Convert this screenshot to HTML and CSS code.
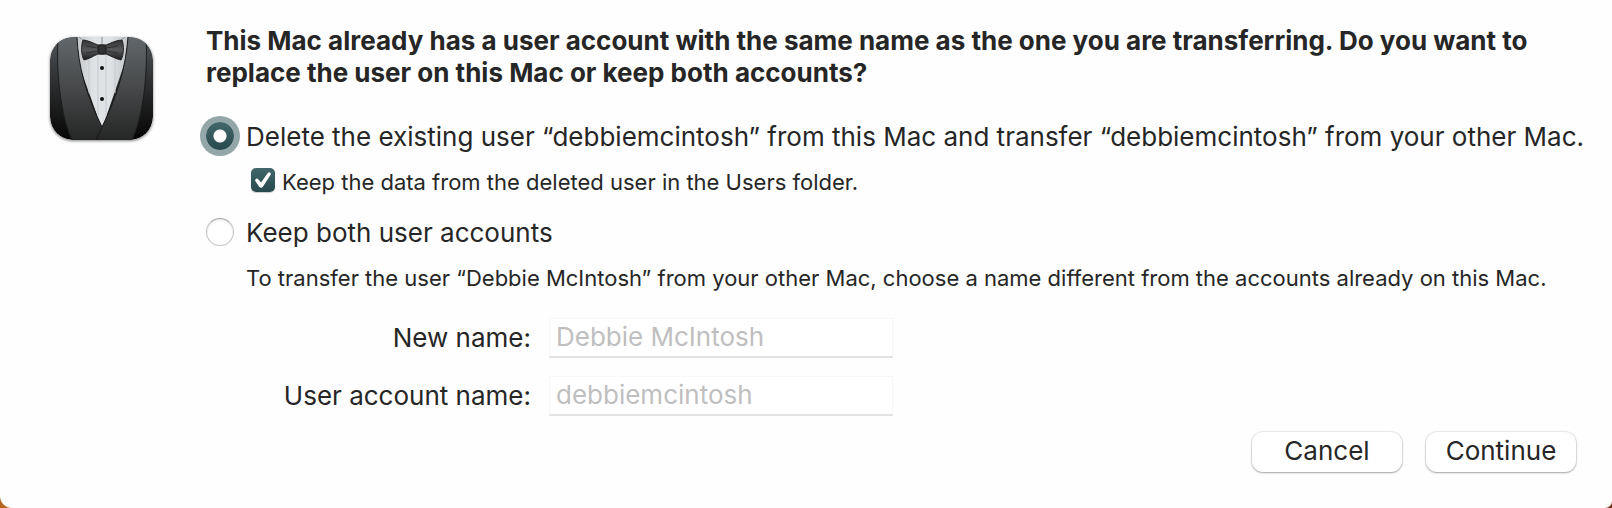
FILE: index.html
```html
<!DOCTYPE html>
<html lang="en">
<head>
    <meta charset="UTF-8">
    <meta name="viewport" content="width=device-width, initial-scale=1.0">
    <title>Migration Assistant</title>
    <link rel="stylesheet" href="styles.css">
</head>
<body>
    <form class="dialog">
        <svg class="app-icon" viewBox="0 0 103 103" aria-hidden="true">
            <defs>
                <clipPath id="tile"><rect width="103" height="103" rx="23"/></clipPath>
                <linearGradient id="jacket" x1="0" y1="0" x2="0" y2="1">
                    <stop offset="0" stop-color="#62676b"/>
                    <stop offset="0.5" stop-color="#464849"/>
                    <stop offset="1" stop-color="#252626"/>
                </linearGradient>
                <linearGradient id="sleeve" x1="0" y1="0" x2="0" y2="1">
                    <stop offset="0" stop-color="#50555a"/>
                    <stop offset="0.5" stop-color="#292a2b"/>
                    <stop offset="1" stop-color="#050505"/>
                </linearGradient>
                <linearGradient id="shirt" x1="0" y1="0" x2="1" y2="0">
                    <stop offset="0" stop-color="#c4c7ca"/>
                    <stop offset="0.35" stop-color="#e0e3e6"/>
                    <stop offset="0.65" stop-color="#e0e3e6"/>
                    <stop offset="1" stop-color="#c4c7ca"/>
                </linearGradient>
                <linearGradient id="bow" x1="0" y1="0" x2="0" y2="1">
                    <stop offset="0" stop-color="#303132"/>
                    <stop offset="0.5" stop-color="#58595a"/>
                    <stop offset="1" stop-color="#1c1c1d"/>
                </linearGradient>
            </defs>
            <g clip-path="url(#tile)">
                <rect width="103" height="103" fill="url(#sleeve)"/>
                <path d="M26 0H78L75 25L52 92L28 25Z" fill="url(#shirt)"/>
                <path d="M39 10V56M48 10V80M56 10V80M65 10V56" stroke="#c6c9cd" stroke-width="1"/>
                <path d="M52 0V7M29 0L36 6M75 0L68 6" stroke="#8d9194" stroke-width="1" fill="none"/>
                <path d="M8 0H27C28 28 36 58 52 90L47 103H22C11 80 6 38 8 0Z" fill="url(#jacket)"/>
                <path d="M96 0H78C76 28 68 58 52 90L47 103H82C93 80 98 38 96 0Z" fill="url(#jacket)"/>
                <path d="M8 0C6 38 11 80 22 103M96 0C98 38 93 80 82 103" stroke="#1b1c1d" stroke-width="1" fill="none"/>
                <path d="M27 0C28 28 36 58 52 90M78 0C76 28 68 58 52 90L46 103" stroke="#19191a" stroke-width="1" fill="none"/>
                <path d="M48 8C43 6 37 3 33 3C31 8 31 18 34 23C39 22 43 19 48 17H56C61 19 66 22 71 23C74 18 74 8 72 3C67 3 61 6 56 8Z" fill="url(#bow)" stroke="#242526" stroke-width="1"/>
                <path d="M36 9L47 11M36 16L47 14M68 9L57 11M68 16L57 14" stroke="#303132" stroke-width="1"/>
                <rect x="48" y="8" width="8" height="9" rx="2" fill="#303132" stroke="#1b1b1b"/>
                <circle cx="52" cy="31" r="2" fill="#111"/>
                <circle cx="52" cy="62" r="2" fill="#111"/>
            </g>
        </svg>

        <div class="content">
            <h1>This Mac already has a user account with the same name as the one you are transferring. Do you want to replace the user on this Mac or keep both accounts?</h1>

            <div class="option">
                <input type="radio" name="account" id="replace" checked>
                <label for="replace">Delete the existing user “debbiemcintosh” from this Mac and transfer “debbiemcintosh” from your other Mac.</label>
            </div>
            <div class="sub-option">
                <input type="checkbox" id="keep-data" checked>
                <label for="keep-data">Keep the data from the deleted user in the Users folder.</label>
            </div>
            <div class="option">
                <input type="radio" name="account" id="keep-both">
                <label for="keep-both">Keep both user accounts</label>
            </div>
            <p class="note">To transfer the user “Debbie McIntosh” from your other Mac, choose a name different from the accounts already on this Mac.</p>

            <div class="fields">
                <label for="new-name">New name:</label>
                <input type="text" id="new-name" value="Debbie McIntosh" disabled>
                <label for="account-name">User account name:</label>
                <input type="text" id="account-name" value="debbiemcintosh" disabled>
            </div>

            <div class="buttons">
                <button type="button">Cancel</button>
                <button type="submit">Continue</button>
            </div>
        </div>
    </form>
</body>
</html>
```

FILE: styles.css
```css
* {
    box-sizing: border-box;
}
body {
    margin: 0;
    background: linear-gradient(to right, #b5651d, #7a2e14);
    color: #262626;
    font-family: Inter, "Liberation Sans", sans-serif;
    font-size: 26px;
    line-height: 32px;
}
.dialog {
    display: flex;
    gap: 53px;
    min-height: 100vh;
    padding: 25px 36px 36px 50px;
    background: #fefefe;
    border-radius: 0 0 7px 12px;
}
.app-icon {
    flex: none;
    width: 103px;
    height: 103px;
    margin-top: 12px;
    border-radius: 23px;
    box-shadow: 0 1px 3px rgba(0, 0, 0, 0.5);
}
.content {
    flex: 1;
    display: flex;
    flex-direction: column;
    min-width: 0;
}
h1 {
    margin: 0 0 32px;
    font-size: 26px;
    font-weight: 700;
}
.option {
    display: flex;
    align-items: center;
    gap: 12px;
}
.option label,
.sub-option label,
.note {
    white-space: nowrap;
}
input[type="radio"] {
    appearance: none;
    flex: none;
    width: 28px;
    height: 28px;
    margin: 0 0 2px;
    border: 1px solid #c4c4c4;
    border-top-color: #a8a8a8;
    border-radius: 50%;
    background: #fff;
    box-shadow: inset 0 1px 2px rgba(0, 0, 0, 0.12);
}
input[type="radio"]:checked {
    border: none;
    background: radial-gradient(circle, #fff 6px, transparent 7px), linear-gradient(#42686c, #27494e);
    box-shadow: 0 0 0 6px #93a7a9;
}
.sub-option {
    display: flex;
    align-items: flex-start;
    gap: 7px;
    margin: 13px 0 19px 45px;
    font-size: 22px;
}
input[type="checkbox"] {
    appearance: none;
    flex: none;
    display: grid;
    place-items: center;
    width: 24px;
    height: 24px;
    margin: 2px 0 0;
    border-radius: 5px;
    background: linear-gradient(#42686c, #27494e);
    box-shadow: 0 1px 1px rgba(0, 0, 0, 0.2);
}
input[type="checkbox"]:checked::before {
    content: "";
    width: 16px;
    height: 16px;
    background: #fff;
    clip-path: path("M0.3 9 C-0.4 7 2 5.8 3.1 7.1 L6 10.6 L12.8 0.9 C14.2 -0.6 16.6 0.9 15.6 2.8 L7.9 14.8 C7 16.1 5.2 16.1 4.2 14.8 Z");
}
.note {
    margin: 13px 0 24px 40px;
    font-size: 22px;
}
.fields {
    display: grid;
    grid-template-columns: 325px 344px;
    gap: 18px;
    align-items: center;
}
.fields label {
    text-align: right;
}
input[type="text"] {
    width: 100%;
    height: 40px;
    padding: 0 6px 2px;
    border: 1px solid #f7f7f7;
    border-bottom: 2px solid #e2e2e2;
    background: #fff;
    color: #bfbfbf;
    font: inherit;
}
.buttons {
    display: flex;
    justify-content: flex-end;
    gap: 24px;
    margin-top: 16px;
}
button {
    width: 150px;
    height: 40px;
    padding: 0 0 2px;
    border: none;
    border-radius: 11px;
    background: #fff;
    box-shadow: 0 0 1px 1px rgba(0, 0, 0, 0.08), 0 1px 2px rgba(0, 0, 0, 0.3);
    color: #262626;
    font: inherit;
}
```
